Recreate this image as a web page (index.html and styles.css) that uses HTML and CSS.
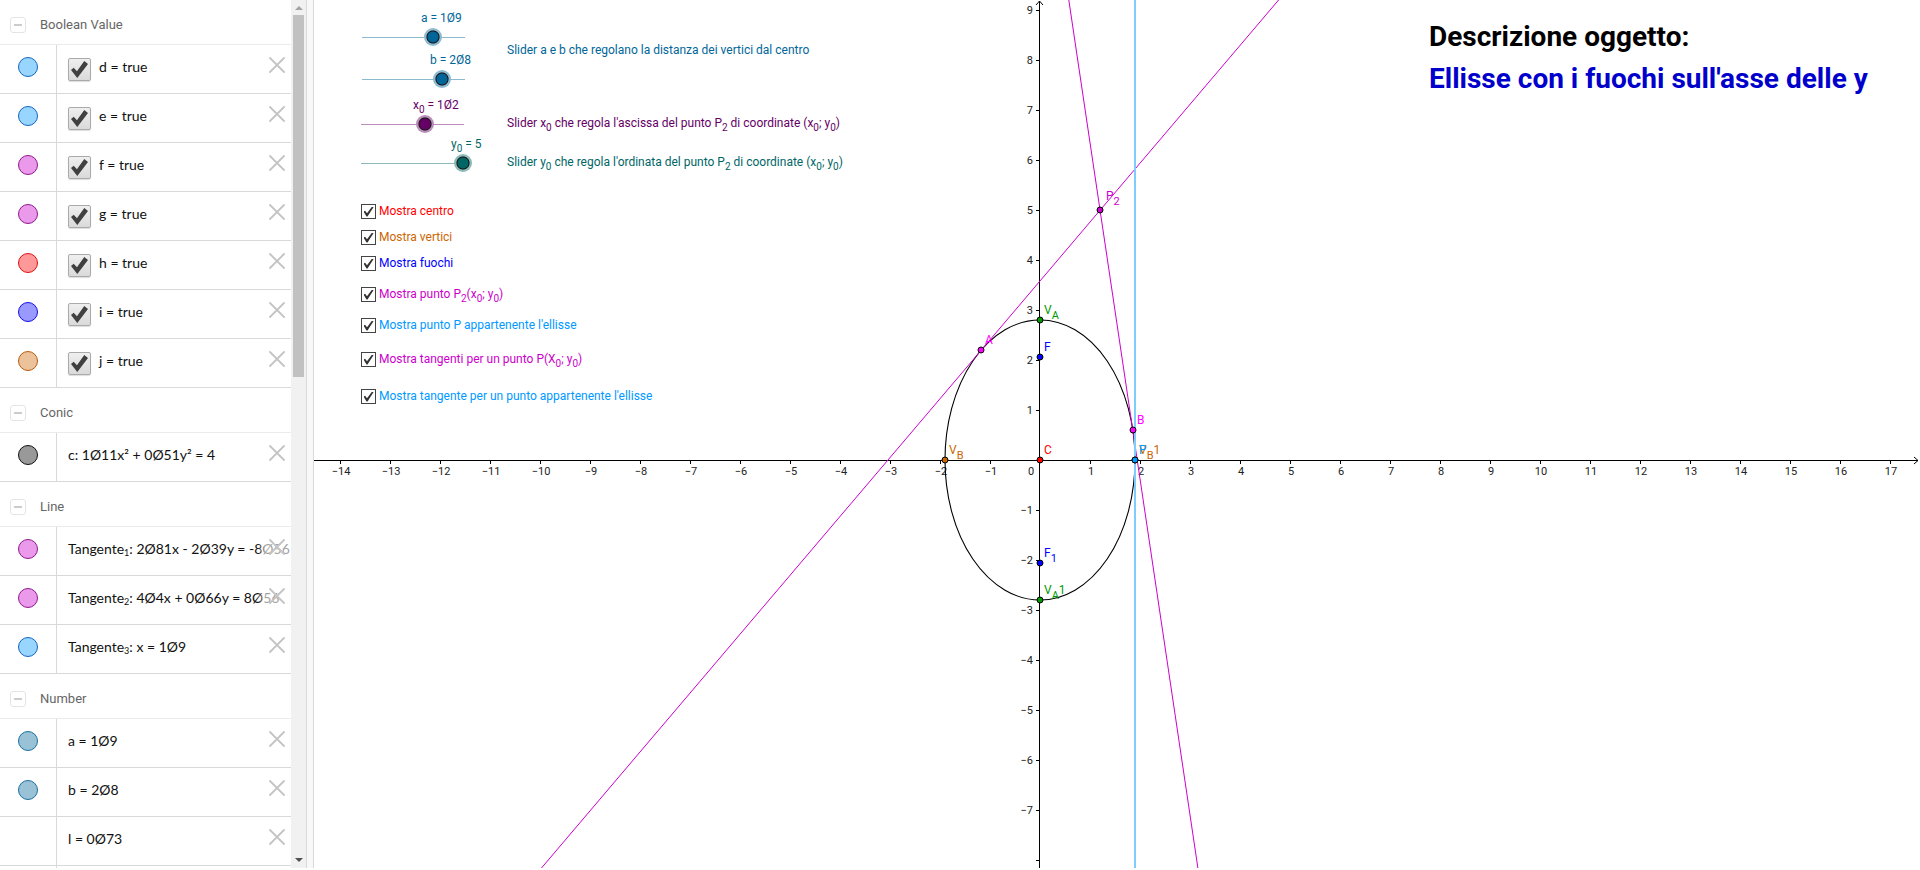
FILE: index.html
```html
<!DOCTYPE html>
<html lang="it">
<head>
<meta charset="utf-8">
<title>Ellisse con i fuochi sull'asse delle y</title>
<link rel="stylesheet" href="styles.css">
</head>
<body>
<svg class="defs" aria-hidden="true">
  <symbol id="close" viewBox="0 0 16 16"><path d="M1 1 15 15M15 1 1 15" fill="none" stroke="#c4c4c4" stroke-width="1.8" stroke-linecap="round"/></symbol>
</svg>
<main class="app">
  <div class="algebra">
    <div class="list" id="list"></div>
    <div class="scrollbar" aria-hidden="true">
      <span class="arrow arrow-up"></span>
      <span class="thumb"></span>
      <span class="arrow arrow-down"></span>
    </div>
  </div>
  <div class="splitter"></div>
  <section class="canvas">
    <svg class="plot" id="plot" role="img" aria-label="Ellisse con tangenti">
      <g id="axes" class="axes"></g>
      <ellipse cx="726" cy="460" rx="95" ry="140" fill="none" stroke="#000" stroke-width="1.1"/>
      <path d="M227.500 868 964.600 0M754.800 0 883.900 868" fill="none" stroke="#cc00cc" stroke-width="1"/>
      <path d="M821 0V868" stroke="#80ccff" stroke-width="2"/>
      <g id="points" class="points"></g>
    </svg>

    <label class="item label-a" for="a">a = 1Ø9</label>
    <input class="item slider slider-a" id="a" type="range" min="-5" max="5" step="0.1" value="1.9">
    <label class="item label-b" for="b">b = 2Ø8</label>
    <input class="item slider slider-b" id="b" type="range" min="-5" max="5" step="0.1" value="2.8">
    <label class="item label-x purple" for="x0">x<sub>0</sub> = 1Ø2</label>
    <input class="item slider slider-x purple" id="x0" type="range" min="-5" max="5" step="0.1" value="1.2">
    <label class="item label-y teal" for="y0">y<sub>0</sub> = 5</label>
    <input class="item slider slider-y teal" id="y0" type="range" min="-5" max="5" step="0.1" value="5">

    <p class="item note note-ab">Slider a e b che regolano la distanza dei vertici dal centro</p>
    <p class="item note note-x purple">Slider x<sub>0</sub> che regola l'ascissa del punto P<sub>2</sub> di coordinate (x<sub>0</sub>; y<sub>0</sub>)</p>
    <p class="item note note-y teal">Slider y<sub>0</sub> che regola l'ordinata del punto P<sub>2</sub> di coordinate (x<sub>0</sub>; y<sub>0</sub>)</p>

    <label class="item check check-1"><input type="checkbox" checked><span>Mostra centro</span></label>
    <label class="item check check-2"><input type="checkbox" checked><span>Mostra vertici</span></label>
    <label class="item check check-3"><input type="checkbox" checked><span>Mostra fuochi</span></label>
    <label class="item check check-4"><input type="checkbox" checked><span>Mostra punto P<sub>2</sub>(x<sub>0</sub>; y<sub>0</sub>)</span></label>
    <label class="item check check-5"><input type="checkbox" checked><span>Mostra punto P appartenente l'ellisse</span></label>
    <label class="item check check-6"><input type="checkbox" checked><span>Mostra tangenti per un punto P(X<sub>0</sub>; y<sub>0</sub>)</span></label>
    <label class="item check check-7"><input type="checkbox" checked><span>Mostra tangente per un punto appartenente l'ellisse</span></label>

    <div class="item heading">
      <h1>Descrizione oggetto:</h1>
      <h2>Ellisse con i fuochi sull'asse delle y</h2>
    </div>
  </section>
</main>
<script src="graph.js"></script>
</body>
</html>
```
FILE: styles.css
```css
* { box-sizing: border-box; }
body {
  margin: 0;
  background: #fff;
  color: #000;
  font-family: Roboto, "Liberation Sans", sans-serif;
  font-size: 12px;
  overflow: hidden;
}
.defs { position: absolute; width: 0; height: 0; }
.app { display: flex; height: calc(100vh - 2px); overflow: hidden; }

/* algebra panel */
.algebra { display: flex; flex: none; width: 306px; }
.list { flex: 1; min-width: 0; overflow: hidden; }
.group { display: flex; align-items: center; gap: 14px; height: 45px; padding: 5px 10px 0; border-bottom: 1px solid #ebebeb; color: #666; font-size: 13px; }
.group-name { font-weight: 400; font-size: 13px; margin: 0; }
.toggle { width: 16px; height: 16px; padding: 0; border: 1px solid #e4e4e4; border-radius: 3px; background: #fff; display: grid; place-items: center; }
.toggle::before { content: ""; width: 8px; height: 2px; background: #ccc; }
.row { position: relative; display: flex; height: 49px; border-bottom: 1px solid #d9d9d9; }
.mark { flex: none; width: 57px; border-right: 1px solid #d9d9d9; padding: 12px 0 0 18px; }
.dot { display: block; width: 20px; height: 20px; padding: 0; border: 1px solid; border-radius: 50%; }
.formula { display: flex; gap: 8px; padding: 0 0 0 11px; font: 14px/44px Lato, "Noto Sans", sans-serif; white-space: nowrap; color: #111; }
.formula sub { font-size: 9px; vertical-align: -2px; line-height: 0; }
.bool { appearance: none; width: 23px; height: 23px; margin: 13px 0 0; border: 1px solid #aaa; border-radius: 2px; background: linear-gradient(#efefef, #dadada); box-shadow: 0 1px 1px #ddd; display: grid; place-items: center; }
.bool::before { content: ""; width: 17px; height: 17px; background: #404040; clip-path: polygon(0 53%, 16% 40%, 35% 60%, 78% 0, 100% 17%, 37% 100%); }
.remove { position: absolute; top: 0; right: 0; width: 34px; height: 40px; padding: 0 6px 0 12px; border: 0; background: linear-gradient(to right, #fff0, #ffffff99 8px); }
.remove svg { display: block; width: 16px; height: 16px; }

.scrollbar { width: 15px; display: flex; flex-direction: column; align-items: center; background: #f1f1f1; }
.arrow { width: 0; height: 0; border: 4px solid transparent; }
.arrow-up { border-bottom-color: #a3a3a3; margin-top: 2px; }
.arrow-down { border-top-color: #505050; margin: auto 0 2px; }
.thumb { width: 11px; height: 362px; margin-top: 5px; background: #c1c1c1; }
.splitter { flex: none; width: 8px; background: #f8f8f8; border: solid #d9d9d9; border-width: 0 1px; }

/* drawing area */
.canvas { position: relative; flex: 1; min-width: 0; overflow: hidden; color: #006699; --tone: #006699; }
.plot { display: block; width: 100%; height: 100%; }
.axes text { font-size: 11px; fill: #222; }
.points text { font-size: 12px; }
.points .small { font-size: 11px; }
.item { position: absolute; margin: 0; white-space: nowrap; line-height: 16px; }
.item sub { font-size: 10px; line-height: 0; vertical-align: -4px; }
.purple { color: #660066; --tone: #660066; }
.teal { color: #006666; --tone: #006666; }
.label-a { left: 107px; top: 10px; }
.label-b { left: 116px; top: 52px; }
.label-x { left: 99px; top: 97px; }
.label-y { left: 137px; top: 136px; }

.slider { appearance: none; width: 121px; height: 18px; background: none; }
.slider::-webkit-slider-runnable-track {
  height: 18px;
  background: linear-gradient(color-mix(in srgb, var(--tone) 45%, white) 0 0) center / calc(100% - 18px) 1px no-repeat;
}
.slider::-webkit-slider-thumb {
  appearance: none;
  width: 18px;
  height: 18px;
  border-radius: 50%;
  background: radial-gradient(circle, var(--tone) 5px, #111 6px, color-mix(in srgb, var(--tone) 45%, white) 7px);
}
.slider-a { left: 39px; top: 28px; }
.slider-b { left: 39px; top: 70px; }
.slider-x { left: 38px; top: 115px; }
.slider-y { left: 38px; top: 154px; width: 120px; }
.note { left: 193px; }
.note-ab { top: 42px; }
.note-x { top: 115px; }
.note-y { top: 154px; }

.check { left: 47px; display: flex; gap: 3px; align-items: center; }
.check input { appearance: none; width: 15px; height: 15px; margin: 2px 0 0; border: 1px solid #444; display: grid; place-items: center; }
.check input::before { content: ""; width: 10px; height: 10px; background: #333; clip-path: polygon(0 50%, 16% 42%, 35% 68%, 86% 0, 100% 8%, 40% 100%, 30% 100%); }
.check-1 { top: 202px; color: #ff0000; }
.check-2 { top: 228px; color: #cc6600; }
.check-3 { top: 254px; color: #0000ff; }
.check-4 { top: 285px; color: #cc00cc; }
.check-5 { top: 316px; color: #0099ff; }
.check-6 { top: 350px; color: #cc00cc; }
.check-7 { top: 387px; color: #0099ff; }

.heading { left: 1115px; top: 16px; }
.heading h1, .heading h2 { margin: 0; font-size: 28px; line-height: 42px; font-weight: 700; color: #000; }
.heading h2 { color: #0000cc; }
```
FILE: graph.js
```js
const groups = [
  ["Boolean Value", [
    ["#99d6ff", "#1565c0", "d = true", true],
    ["#99d6ff", "#1565c0", "e = true", true],
    ["#eb99eb", "#8e1a8e", "f = true", true],
    ["#eb99eb", "#8e1a8e", "g = true", true],
    ["#ff9999", "#e01010", "h = true", true],
    ["#9999ff", "#1010e0", "i = true", true],
    ["#ebc299", "#b85c10", "j = true", true]]],
  ["Conic", [["#999999", "#111111", "c: 1Ø11x² + 0Ø51y² = 4"]]],
  ["Line", [
    ["#eb99eb", "#8e1a8e", "Tangente<sub>1</sub>: 2Ø81x - 2Ø39y = -8Ø56"],
    ["#eb99eb", "#8e1a8e", "Tangente<sub>2</sub>: 4Ø4x + 0Ø66y = 8Ø56"],
    ["#99d6ff", "#1565c0", "Tangente<sub>3</sub>: x = 1Ø9"]]],
  ["Number", [
    ["#99c2d6", "#1a70a0", "a = 1Ø9"],
    ["#99c2d6", "#1a70a0", "b = 2Ø8"],
    [null, null, "l = 0Ø73"],
    [null, null, ""]]]
];

document.getElementById("list").innerHTML = groups.map(([name, rows]) =>
  `<div class="group"><button class="toggle" aria-label="Comprimi ${name}"></button><h3 class="group-name">${name}</h3></div>` +
  rows.map(([fill, edge, text, bool]) =>
    `<div class="row"><div class="mark">${fill ? `<button class="dot" style="background:${fill};border-color:${edge}" aria-label="Mostra o nascondi"></button>` : ""}</div>` +
    `<label class="formula">${bool ? `<input class="bool" type="checkbox" checked>` : ""}<span>${text}</span></label>` +
    (text ? `<button class="remove" aria-label="Elimina"><svg><use href="#close"/></svg></button>` : "") +
    `</div>`).join("")).join("");

// Axes: origin and unit length in pixels of the drawing area
const ox = 726, oy = 460, unit = 50;
const width = document.getElementById("plot").clientWidth;
let lines = `M0 ${oy + .5}H${width - 2}M${width - 6} ${oy - 3}l4 3.500l-4 3.500M${ox - .5} 1V868M${ox - 4} 5l3.500-4l3.500 4`;
let labels = "";
const sign = n => String(n).replace("-", "−");
for (let n = -14; n <= 17; n++) {
  const x = ox + n * unit;
  if (n) lines += `M${x + .5} ${oy}v4`;
  labels += n ? `<text x="${x + 1}" y="475" text-anchor="middle">${sign(n)}</text>` : `<text x="${x - 9}" y="475" text-anchor="middle">0</text>`;
}
for (let n = -8; n <= 9; n++) {
  if (!n) continue;
  const y = oy - n * unit;
  lines += `M${ox - 4} ${y + .5}h4`;
  if (n > -8) labels += `<text x="${ox - 7}" y="${y + 4}" text-anchor="end">${sign(n)}</text>`;
}
document.getElementById("axes").innerHTML = `<path d="${lines}" fill="none" stroke="#000"/>${labels}`;

// Points: x, y, colour, name, subscript, suffix
const points = [
  [726, 320, "#009900", "V", "A", ""],
  [726, 600, "#009900", "V", "A", "1"],
  [631, 460, "#cc6600", "V", "B", ""],
  [821, 460, "#cc6600", "V", "B", "1"],
  [726, 460, "#ff0000", "C", "", ""],
  [726, 357, "#0000ff", "F", "", ""],
  [726, 563, "#0000ff", "F", "1", ""],
  [786, 210, "#cc00cc", "P", "2", "", 6, -10],
  [667, 350, "#ff00ff", "A", "", ""],
  [819, 430, "#ff00ff", "B", "", ""],
  [821, 460, "#0099ff", "P", "", ""]
];
document.getElementById("points").innerHTML = points.map(([x, y, c, t, s, e, dx = 4, dy = -6]) =>
  `<circle cx="${x}" cy="${y}" r="3" fill="${c}" stroke="#000"/>` +
  `<text x="${x + dx}" y="${y + dy}" fill="${c}">${t}${s ? `<tspan class="small" dy="5">${s}</tspan>` : ""}${e ? `<tspan dy="-5">${e}</tspan>` : ""}</text>`).join("");
```
